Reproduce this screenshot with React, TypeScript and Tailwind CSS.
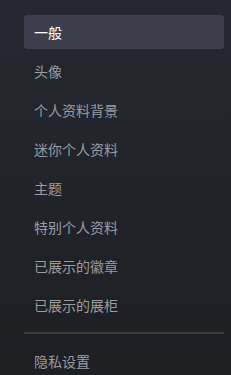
import React from "react";

const items = [
  "头像",
  "个人资料背景",
  "迷你个人资料",
  "主题",
  "特别个人资料",
  "已展示的徽章",
  "已展示的展柜",
];

export default function App() {
  return (
    <div
      className="w-[231px] h-[375px] overflow-hidden bg-gradient-to-b from-[#252830] to-[#1d1f23] pt-[15px] pl-[24px] pr-[7px]"
      style={{ fontFamily: '"Noto Sans CJK SC", "Liberation Sans", sans-serif' }}
    >
      <div className="flex flex-col gap-[5px]">
        <div className="h-[34px] rounded-[3px] bg-[#3d404c] flex items-center pl-[10px] text-[14px] text-white">
          一般
        </div>
        {items.map((t) => (
          <div
            key={t}
            className="h-[34px] flex items-center pl-[10px] text-[14px] text-[#9a9ca1]"
          >
            {t}
          </div>
        ))}
      </div>
      <div className="mt-[10px] h-[2px] bg-[#3a3d43]" />
      <div className="mt-[10px] h-[34px] flex items-center pl-[10px] text-[14px] text-[#9a9ca1]">
        隐私设置
      </div>
    </div>
  );
}
